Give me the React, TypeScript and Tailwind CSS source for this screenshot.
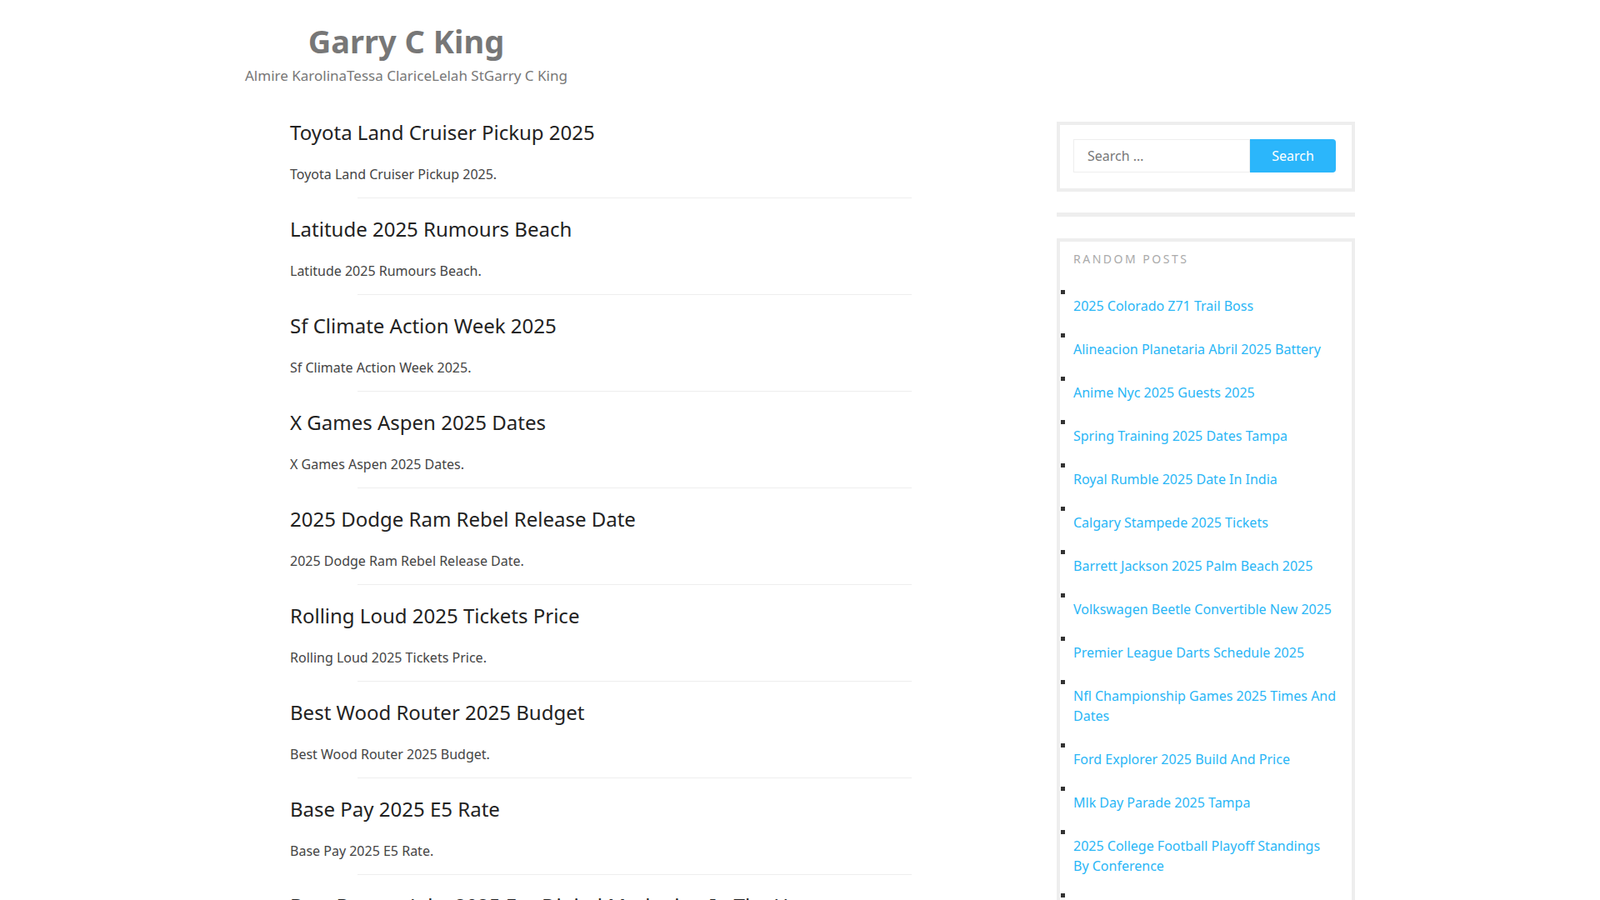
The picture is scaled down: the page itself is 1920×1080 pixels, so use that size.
const posts = [
  'Toyota Land Cruiser Pickup 2025',
  'Latitude 2025 Rumours Beach',
  'Sf Climate Action Week 2025',
  'X Games Aspen 2025 Dates',
  '2025 Dodge Ram Rebel Release Date',
  'Rolling Loud 2025 Tickets Price',
  'Best Wood Router 2025 Budget',
  'Base Pay 2025 E5 Rate',
  'Best Degree Jobs 2025 For Digital Marketing In The Us',
]

const random = [
  '2025 Colorado Z71 Trail Boss',
  'Alineacion Planetaria Abril 2025 Battery',
  'Anime Nyc 2025 Guests 2025',
  'Spring Training 2025 Dates Tampa',
  'Royal Rumble 2025 Date In India',
  'Calgary Stampede 2025 Tickets',
  'Barrett Jackson 2025 Palm Beach 2025',
  'Volkswagen Beetle Convertible New 2025',
  'Premier League Darts Schedule 2025',
  'Nfl Championship Games 2025 Times And Dates',
  'Ford Explorer 2025 Build And Price',
  'Mlk Day Parade 2025 Tampa',
  '2025 College Football Playoff Standings By Conference',
  'Disney World Ticket Prices 2025',
]

export default function App() {
  return (
    <div className="min-h-screen bg-white font-['Open_Sans',sans-serif]">
      <div className="w-[1332px] mx-auto">
        <header className="pt-[17px] inline-block text-center">
          <h1 className="text-[38px] leading-[64px] font-bold text-[#777]">Garry C King</h1>
          <nav className="flex text-[17px] leading-[20px] text-[#777]">
            <a>Almire Karolina</a>
            <a>Tessa Clarice</a>
            <a>Lelah St</a>
            <a>Garry C King</a>
          </nav>
        </header>
        <div className="flex">
          <main className="w-[836px] pl-[54px] pt-[38px]">
            {posts.map((p, i) => (
              <article key={i}>
                <h2 className="text-[24px] leading-[36px] text-[#222]">{p}</h2>
                <p className="mt-[18px] text-[16px] leading-[28px] text-[#444]">{p}.</p>
                <div className="ml-[81px] mt-[14px] mb-[19px] h-px bg-[#eee]" />
              </article>
            ))}
          </main>
          <aside className="ml-[174px] w-[358px] pt-[43px]">
            <div className="border-4 border-[#eee] pl-[16px] pr-[19px] pt-[17px] pb-[19px] flex">
              <input
                placeholder="Search …"
                className="flex-1 min-w-0 h-[40px] border border-[#eee] px-[16px] text-[16px] text-[#777] placeholder:text-[#777] outline-none"
              />
              <button className="w-[103px] h-[40px] bg-[#2bb6fb] text-white text-[16px] rounded-r-[4px]">Search</button>
            </div>
            <div className="mt-[25px] h-[5px] bg-[#eee]" />
            <div className="mt-[26px] border-4 border-[#eee] px-[16px] pt-[11px] pb-[20px]">
              <h3 className="text-[14px] leading-[20px] tracking-[2.5px] text-[#aaa]">RANDOM POSTS</h3>
              <ul className="mt-[24px] flex flex-col gap-[18px]">
                {random.map((r, i) => (
                  <li key={i}>
                    <div className="h-[10px] flex items-center">
                      <span className="block w-[5px] h-[5px] bg-[#333] ml-[-15px]" />
                    </div>
                    <a className="block text-[16px] leading-[24px] text-[#29b6f6]">{r}</a>
                  </li>
                ))}
              </ul>
            </div>
          </aside>
        </div>
      </div>
    </div>
  )
}
